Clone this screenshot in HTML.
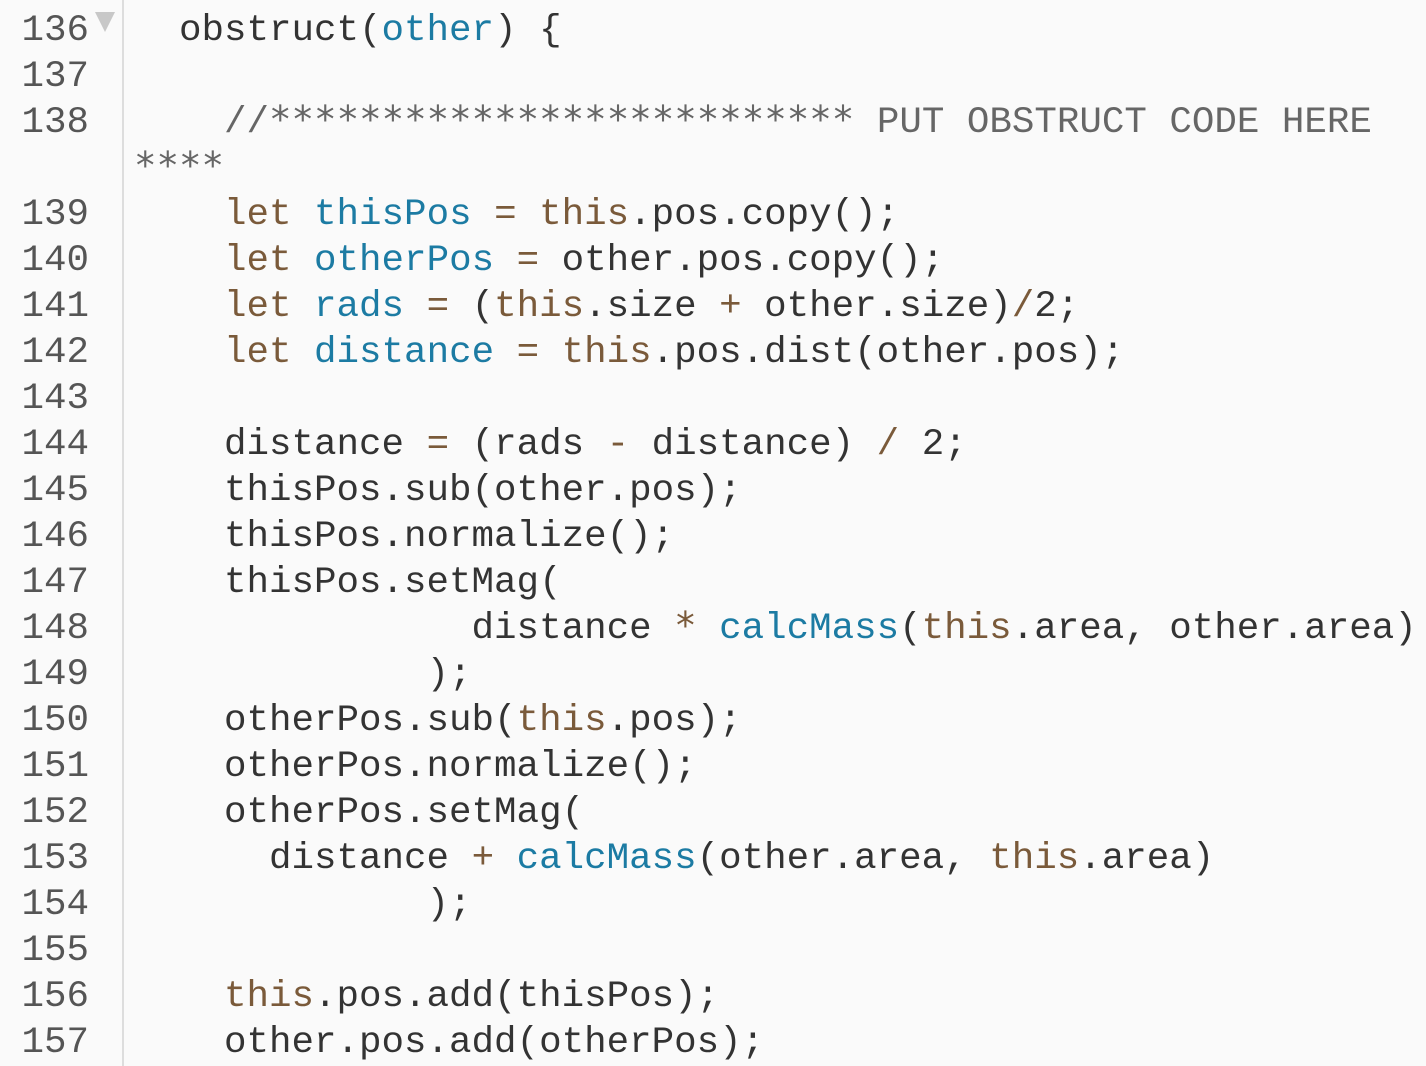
<!DOCTYPE html><html><head><style>
body{margin:0;width:1426px;height:1066px;background:#fafafa;overflow:hidden;font-family:"Liberation Mono",monospace;font-size:37.5px;}
.g{position:absolute;left:0;top:0;width:122px;height:1066px;border-right:2px solid #ddd;}
.r{position:absolute;left:0;height:46px;line-height:46px;white-space:pre;}
.n{position:absolute;left:0;width:89px;text-align:right;color:#555;}
.c{position:absolute;left:134px;color:#333;}
.k{color:#7a5a3a}.b{color:#1c7ba3}.m{color:#666}
.s{font-family:"DejaVu Sans Mono",monospace;font-size:37.4px;line-height:0;}
.tri{position:absolute;left:95px;top:12px;width:0;height:0;border-left:10px solid transparent;border-right:10px solid transparent;border-top:20px solid #c8c8c8;}
</style></head><body><div class="g"></div><div class="tri"></div>
<div class="r" style="top:8px"><span class="n">136</span><span class="c">  obstruct(<span class="b">other</span>) {</span></div>
<div class="r" style="top:54px"><span class="n">137</span></div>
<div class="r" style="top:100px"><span class="n">138</span><span class="c m">    //<span class="s">**************************</span> PUT OBSTRUCT CODE HERE</span></div>
<div class="r" style="top:146px"><span class="c m"><span class="s">****</span></span></div>
<div class="r" style="top:192px"><span class="n">139</span><span class="c">    <span class="k">let</span> <span class="b">thisPos</span> <span class="k">=</span> <span class="k">this</span>.pos.copy();</span></div>
<div class="r" style="top:238px"><span class="n">140</span><span class="c">    <span class="k">let</span> <span class="b">otherPos</span> <span class="k">=</span> other.pos.copy();</span></div>
<div class="r" style="top:284px"><span class="n">141</span><span class="c">    <span class="k">let</span> <span class="b">rads</span> <span class="k">=</span> (<span class="k">this</span>.size <span class="k">+</span> other.size)<span class="k">/</span>2;</span></div>
<div class="r" style="top:330px"><span class="n">142</span><span class="c">    <span class="k">let</span> <span class="b">distance</span> <span class="k">=</span> <span class="k">this</span>.pos.dist(other.pos);</span></div>
<div class="r" style="top:376px"><span class="n">143</span></div>
<div class="r" style="top:422px"><span class="n">144</span><span class="c">    distance <span class="k">=</span> (rads <span class="k">-</span> distance) <span class="k">/</span> 2;</span></div>
<div class="r" style="top:468px"><span class="n">145</span><span class="c">    thisPos.sub(other.pos);</span></div>
<div class="r" style="top:514px"><span class="n">146</span><span class="c">    thisPos.normalize();</span></div>
<div class="r" style="top:560px"><span class="n">147</span><span class="c">    thisPos.setMag(</span></div>
<div class="r" style="top:606px"><span class="n">148</span><span class="c">               distance <span class="k s">*</span> <span class="b">calcMass</span>(<span class="k">this</span>.area, other.area)</span></div>
<div class="r" style="top:652px"><span class="n">149</span><span class="c">             );</span></div>
<div class="r" style="top:698px"><span class="n">150</span><span class="c">    otherPos.sub(<span class="k">this</span>.pos);</span></div>
<div class="r" style="top:744px"><span class="n">151</span><span class="c">    otherPos.normalize();</span></div>
<div class="r" style="top:790px"><span class="n">152</span><span class="c">    otherPos.setMag(</span></div>
<div class="r" style="top:836px"><span class="n">153</span><span class="c">      distance <span class="k">+</span> <span class="b">calcMass</span>(other.area, <span class="k">this</span>.area)</span></div>
<div class="r" style="top:882px"><span class="n">154</span><span class="c">             );</span></div>
<div class="r" style="top:928px"><span class="n">155</span></div>
<div class="r" style="top:974px"><span class="n">156</span><span class="c">    <span class="k">this</span>.pos.add(thisPos);</span></div>
<div class="r" style="top:1020px"><span class="n">157</span><span class="c">    other.pos.add(otherPos);</span></div>
</body></html>
